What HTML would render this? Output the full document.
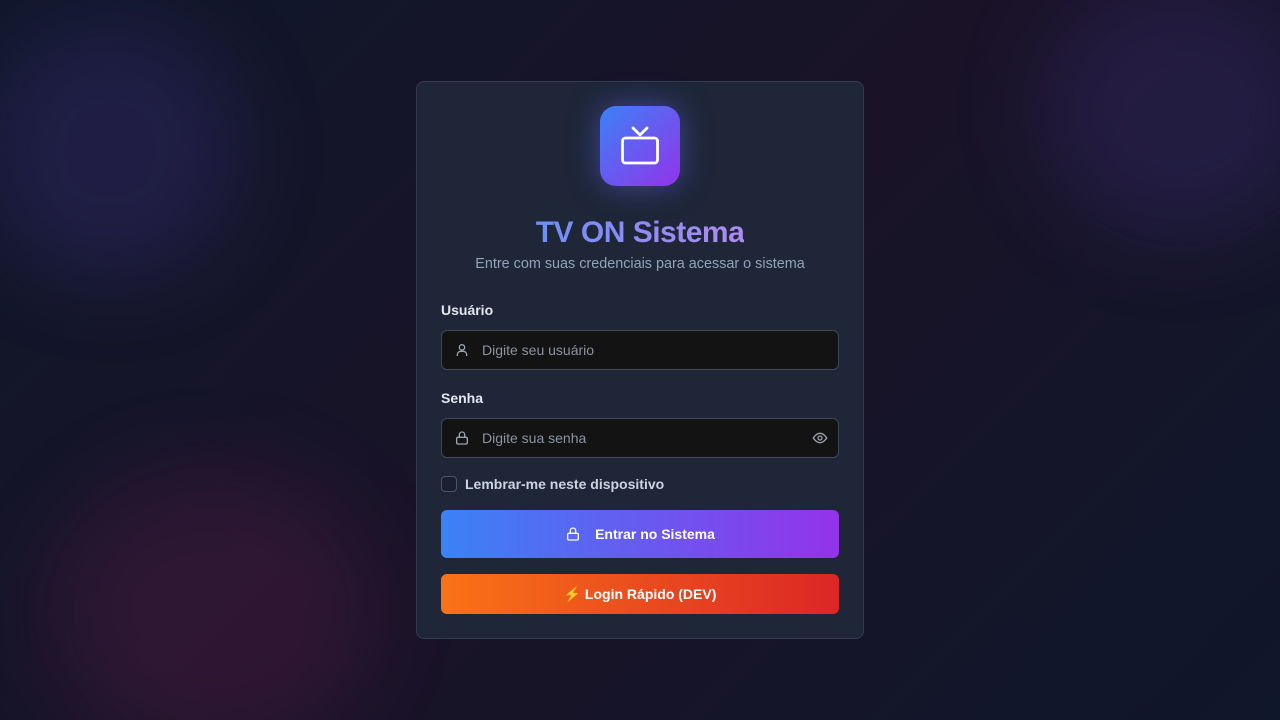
<!DOCTYPE html>
<html style="background:#111427"><head><meta charset="utf-8"><style>
*{box-sizing:border-box;margin:0;padding:0}
html,body{width:1280px;height:720px;overflow:hidden}
body{font-family:"Liberation Sans",sans-serif;background:linear-gradient(135deg,#0f172a 0%,#1a1328 50%,#0f172a 100%);position:relative}
.blob{position:absolute;border-radius:50%;filter:blur(40px)}
.card{position:absolute;left:416px;top:81px;width:448px;height:558px;background:#1e2638;border:1px solid #333b4e;border-radius:8px}
.logo{position:absolute;left:183px;top:24px;width:80px;height:80px;border-radius:16px;background:linear-gradient(135deg,#3b82f6,#9333ea);box-shadow:0 0 30px rgba(99,102,241,.5)}
h1{position:absolute;left:0;right:0;top:134px;text-align:center;font-size:30px;font-weight:bold;letter-spacing:-0.5px;color:#8b9cf5}
h1 span{background:linear-gradient(90deg,#6d8ef7,#b08bf0);-webkit-background-clip:text;color:transparent}
.sub{position:absolute;left:0;right:0;top:174px;text-align:center;font-size:14.4px;color:#94a3b8}
.lbl{position:absolute;left:24px;font-size:14px;font-weight:bold;color:#e2e8f0}
.inp{position:absolute;left:24px;width:398px;height:40px;background:#131313;border:1px solid #404858;border-radius:6px;color:#8b93a1;font-size:14px;padding-left:40px;line-height:38px}
.inp svg{position:absolute;left:12px;top:11px}
.btn{position:absolute;left:24px;width:398px;border-radius:6px;color:#fff;font-size:14px;font-weight:bold;text-align:center}
</style></head><body>
<div class="blob" style="left:-20px;top:20px;width:260px;height:260px;background:rgba(70,50,140,.28)"></div>
<div class="blob" style="left:1040px;top:-20px;width:280px;height:260px;background:rgba(70,50,140,.25)"></div>
<div class="blob" style="left:50px;top:470px;width:320px;height:280px;background:rgba(110,30,80,.25)"></div>
<div class="card">
<div class="logo"><svg width="80" height="80" viewBox="0 0 80 80" fill="none" stroke="#fff" stroke-width="2.8" stroke-linecap="round" stroke-linejoin="round"><rect x="22.5" y="32" width="35" height="25" rx="3"/><path d="M33 22l7 7 7-7"/></svg></div>
<h1><span>TV ON Sistema</span></h1>
<div class="sub">Entre com suas credenciais para acessar o sistema</div>
<div class="lbl" style="top:220px">Usuário</div>
<div class="inp" style="top:248px"><svg width="16" height="16" viewBox="0 0 24 24" fill="none" stroke="#9ca3af" stroke-width="2"><circle cx="12" cy="8" r="4"/><path d="M5 21v-2a5 5 0 015-5h4a5 5 0 015 5v2"/></svg>Digite seu usuário</div>
<div class="lbl" style="top:308px">Senha</div>
<div class="inp" style="top:336px"><svg width="16" height="16" viewBox="0 0 24 24" fill="none" stroke="#9ca3af" stroke-width="2"><rect x="4" y="11" width="16" height="10" rx="2"/><path d="M8 11V7a4 4 0 018 0v4"/></svg>Digite sua senha<svg style="left:auto;right:10px" width="16" height="16" viewBox="0 0 24 24" fill="none" stroke="#9ca3af" stroke-width="2"><path d="M2 12s4-7 10-7 10 7 10 7-4 7-10 7S2 12 2 12z"/><circle cx="12" cy="12" r="3"/></svg></div>
<div style="position:absolute;left:24px;top:394px;width:16px;height:16px;border:1px solid #4b5563;border-radius:4px;background:#1a2030"></div>
<div style="position:absolute;left:48px;top:394px;font-size:14px;font-weight:bold;color:#cbd5e1">Lembrar-me neste dispositivo</div>
<div class="btn" style="top:428px;height:48px;line-height:48px;background:linear-gradient(90deg,#3b82f6,#9333ea)"><svg style="vertical-align:-3px;margin-right:14px" width="16" height="16" viewBox="0 0 24 24" fill="none" stroke="#fff" stroke-width="2"><rect x="4" y="11" width="16" height="10" rx="2"/><path d="M8 11V7a4 4 0 018 0v4"/></svg>Entrar no Sistema</div>
<div class="btn" style="top:492px;height:40px;line-height:40px;background:linear-gradient(90deg,#f97316,#dc2626)"><span style="color:#facc15">⚡</span> Login Rápido (DEV)</div>
</div>
</body></html>
